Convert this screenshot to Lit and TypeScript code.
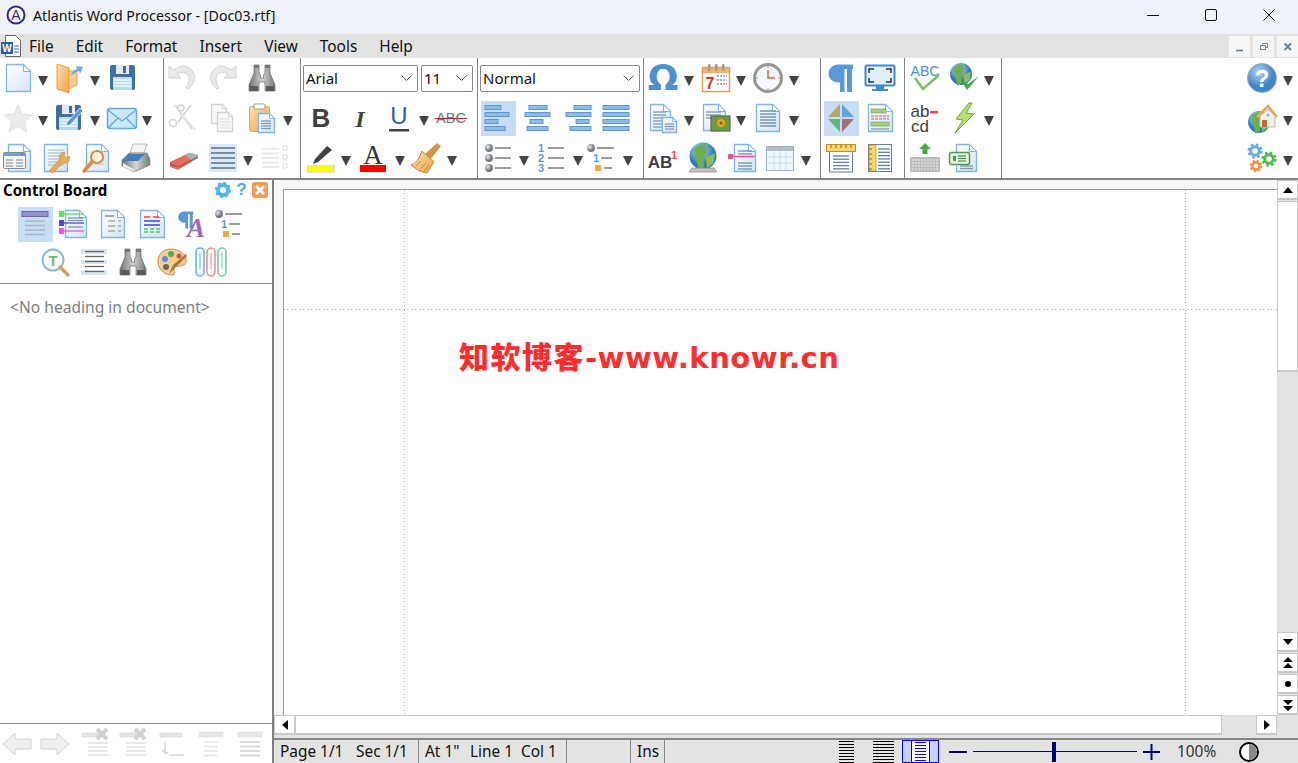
import { LitElement, css, html, svg, SVGTemplateResult } from 'lit'
import { customElement } from 'lit/decorators.js'

const SANS = "'Liberation Sans', Arial, sans-serif"

// shared bits for the toolbar icons
const page = (x: number, y: number, w: number, h: number, f = 7, s = '#7fb5ea', fill = 'url(#pg)') => svg`
  <path d="M${x} ${y}h${w - f}l${f} ${f}v${h - f}h${-w}z" fill=${fill} stroke=${s} stroke-width="1.3" />
  <path d="M${x + w - f} ${y}v${f}h${f}z" fill="#fff" stroke=${s} stroke-width="1" />`

const lines = (x: number, y: number, w: number, n: number, gap: number, c = '#7d96b4', sw = 1.3) => svg`
  ${Array.from({ length: n }, (_, i) => svg`<path d="M${x} ${y + i * gap}h${w}" stroke=${c} stroke-width=${sw} />`)}`

const bars = (rows: [number, number][]) => svg`
  ${rows.map(([x, w], i) => svg`<rect x=${x} y=${3.5 + i * 7} width=${w} height="4" fill="#8fbbe8" stroke="#5d97d5" stroke-width="1" />`)}`

const ball = (x: number, y: number, r = 3.9) => svg`<circle cx=${x} cy=${y} r=${r} fill="url(#ball)" />`

const gear = (cx: number, cy: number, r: number, c: string) => {
  const len = (2 * Math.PI * r) / 16
  return svg`
    <circle cx=${cx} cy=${cy} r=${r} fill="none" stroke=${c} stroke-width=${r * 0.55} stroke-dasharray="${len} ${len}" />
    <circle cx=${cx} cy=${cy} r=${r * 0.72} fill="#fff" stroke=${c} stroke-width=${r * 0.5} />`
}

const globe = (cx: number, cy: number, r: number) => svg`
  <circle cx=${cx} cy=${cy} r=${r} fill="url(#sea)" />
  <path d="M${cx - r * 0.7} ${cy - r * 0.5}q${r * 0.5} ${-r * 0.5} ${r * 0.9} ${-r * 0.3}l${r * 0.1} ${r * 0.5}l${-r * 0.3} ${r * 0.4}l${r * 0.1} ${r * 0.7}l${-r * 0.4} ${r * 0.3}l${-r * 0.2} ${-r * 0.8}z" fill="#6db04a" />
  <path d="M${cx + r * 0.2} ${cy + r * 0.1}l${r * 0.7} ${-r * 0.3}l${-r * 0.1} ${r * 0.7}l${-r * 0.5} ${r * 0.4}z" fill="#8abf55" />`

const binoculars = svg`
  <path d="M8 3h5v8l1.500 2v3h3v-3l1.500-2V3h5v8l5 12v6H19v-9h-6v9H3v-6l5-12z" fill="url(#steel)" stroke="#666" stroke-width=".7" />
  <path d="M8 3h5v3H8zM19 3h5v3h-5z" fill="#777" />
  <path d="M4 24h8v5H4zM20 24h8v5h-8z" fill="#5a5a5a" />`

const floppy = svg`
  <rect x="4" y="3" width="25" height="25" rx="2" fill="#41709f" />
  <rect x="10" y="3" width="13" height="9" fill="#e3e9f0" /><rect x="17" y="4" width="3" height="7" fill="#41709f" />
  <rect x="7" y="15" width="19" height="13" fill="#b6dbf5" />
  ${lines(8, 18, 17, 3, 3, '#fff', 1.2)}`

// paragraph mark: bowl with two heavy stems
const PILCROW = 'M28 2.500H12.500a9 9 0 0 0 0 18h2.500V30h4.500V7h2.500v23H27V7h1z'

const txt = (x: number, y: number, size: number, fill: string, s: string, weight = 'normal', style = 'normal', family = SANS) => svg`
  <text x=${x} y=${y} font-size=${size} fill=${fill} font-weight=${weight} font-style=${style} font-family=${family} text-anchor="middle">${s}</text>`

const GR = '#e6e6e6'
const GD = '#d2d2d2'

const ICONS: Record<string, SVGTemplateResult> = {
  new: page(4.5, 2.5, 24, 27),
  open: svg`
    <path d="M15 9h10v14l-10 5z" fill="#f7cf8d" stroke="#e8a64f" />
    <path d="M5 2l12 4v25L5 27z" fill="url(#org)" stroke="#e59f45" />
    <path d="M19 14q1-6 6-7l-1-3 7 1-3 7-1-3q-4 1-8 5z" fill="#6faee6" />`,
  save: floppy,
  star: svg`<path d="M16 3l4 9 10 1-7.5 6.5L25 30l-9-5.500L7 30l2.500-10.500L2 13l10-1z" fill="#ebebeb" stroke="#e0e0e0" />`,
  saveas: svg`${floppy}<path d="M14 24l1-4L28 6l3 3-13 14z" fill="#5f97cf" stroke="#fff" stroke-width=".8" />`,
  mail: svg`
    <rect x="1.500" y="6.500" width="29" height="20" rx="2.500" fill="#cfe7fa" stroke="#58ade9" stroke-width="1.500" />
    <path d="M2 8l14 11L30 8M2 26l10-10M30 26L20 16" fill="none" stroke="#58ade9" stroke-width="1.300" />`,
  web: svg`
    ${page(6.5, 2.5, 22, 27)}
    <rect x="1.500" y="10.500" width="22" height="16" rx="1" fill="#f4f4f4" stroke="#8a8a8a" />
    <rect x="2" y="11" width="21" height="3" fill="#6aa3dc" /><circle cx="20" cy="12.500" r="1" fill="#e05050" />
    ${lines(4, 18, 7, 3, 3, '#999', 1.200)}${lines(14, 18, 7, 3, 3, '#999', 1.200)}`,
  docwrench: svg`
    ${page(4.5, 2.5, 23, 27, 0)}${lines(8, 8, 16, 6, 3, '#b4c4d6')}
    <path d="M9 29l4 2 10-10q5 1 6-3l1-4-3 2-3-2 1-4q-4 0-6 4l1 3z" fill="#e8ab55" stroke="#c98a30" stroke-width=".6" />`,
  preview: svg`
    ${page(6.5, 2.5, 22, 27)}${lines(10, 10, 14, 5, 3, '#c0d0e2')}
    <circle cx="17" cy="15" r="6" fill="#fdf2df" stroke="#d98c35" stroke-width="2" />
    <path d="M12 20l-8 9" stroke="#d98c35" stroke-width="3.500" stroke-linecap="round" />`,
  printer: svg`
    <path d="M13 2h14l-3 9H10z" fill="#f4f4f4" stroke="#bbb" />
    <path d="M9 11h18l3 6v6L14 30 2 24v-6z" fill="url(#steel)" stroke="#8a8a8a" stroke-width=".8" />
    <path d="M8 12h17l-7 7H4z" fill="#3c7fc0" />
    <path d="M3 21l10 6 2 3-12-5z" fill="#eee" /><circle cx="24" cy="20" r="1" fill="#4c4" />`,
  undo: svg`<path d="M2 4v12h12l-4-4q7-4 11 1 3 5-2 13l2 1q10-9 5-17Q20-1 7 8z" fill="#eaeaea" stroke="${GD}" />`,
  redo: svg`<path d="M30 4v12H18l4-4q-7-4-11 1-3 5 2 13l-2 1Q1 18 6 10 12-1 25 8z" fill="#eaeaea" stroke="${GD}" />`,
  binoculars,
  cut: svg`
    <path d="M8 3l17 24M24 3L11 20" stroke="${GD}" stroke-width="1.500" fill="none" />
    <path d="M14 12L28 28" stroke="#e4e4e4" stroke-width="2" />
    <circle cx="6" cy="21" r="3.500" fill="none" stroke="${GD}" stroke-width="1.500" /><circle cx="14" cy="6" r="3" fill="none" stroke="${GD}" stroke-width="1.500" />`,
  copy: svg`
    ${page(5.5, 2.5, 15, 19, 4, GD, '#f7f7f7')}${page(11.5, 10.5, 15, 19, 4, GD, '#f7f7f7')}${lines(14, 17, 10, 4, 3, '#e2e2e2')}`,
  paste: svg`
    <rect x="3.500" y="4.500" width="20" height="25" rx="2" fill="url(#org)" stroke="#e3a34c" />
    <rect x="8" y="2" width="11" height="5" rx="1" fill="#fff" stroke="#999" />
    ${page(12.5, 11.5, 16, 19, 5)}${lines(15, 19, 10, 4, 2.500)}`,
  eraser: svg`
    <path d="M2 20l19-9 9 2 0 3-20 12-8-3z" fill="#e36b5f" />
    <path d="M17 13l5-2 8 2v3l-6 3z" fill="#9db0bc" /><path d="M2 22l8 3 20-10" fill="none" stroke="#a8433a" stroke-width="1" />`,
  justify: svg`<rect x="2" y="2" width="28" height="28" fill="#dbe8f5" />${lines(4, 6, 24, 5, 5, '#5b7089', 1.500)}`,
  linesoff: svg`${lines(3, 7, 17, 5, 4.500, '#e4e4e4', 1.600)}<path d="M24 4h4v4h-4zM24 13h4v4h-4zM24 22h4v4h-4z" fill="none" stroke="#dadada" />`,
  b: txt(16, 25, 26, '#3f3f3f', 'B', 'bold'),
  i: txt(16, 25, 24, '#444', 'I', 'bold', 'italic', "'Liberation Serif', serif"),
  u: svg`${txt(16, 22, 24, '#3c5e86', 'U')}<rect x="6" y="27" width="20" height="2.500" fill="#444" />`,
  abc: svg`${txt(16, 21, 14.500, '#777', 'ABC')}<path d="M0 16.500h32" stroke="#b03030" stroke-width="1.200" />`,
  hilite: svg`
    <path d="M13 20l-5 2 2-5L22 4l5 4z" fill="#444" /><rect x="2.500" y="23.500" width="27" height="7" fill="#ff0" stroke="#ddd" />`,
  fontcolor: svg`${txt(16, 22, 27, '#333', 'A', 'normal', 'normal', "'Liberation Serif', serif")}<rect x="3" y="23" width="26" height="7" fill="#f00" />`,
  brush: svg`
    <path d="M15 12L27 1l4 3-11 14z" fill="#d09848" />
    <path d="M12 9l12 11-7 11q-9-1-16-8 7-2 11-14z" fill="url(#org)" stroke="#c48a3a" />
    <path d="M6 24l5-5M10 27l6-6M14 29l5-6" stroke="#c48a3a" />`,
  al: bars([[2, 16], [2, 24], [2, 13], [2, 20]]),
  ac: bars([[7, 18], [3, 25], [8, 13], [5, 21]]),
  ar: bars([[13, 17], [5, 25], [15, 13], [9, 21]]),
  aj: bars([[3, 26], [3, 26], [3, 26], [3, 26]]),
  bul: svg`${[6, 16, 26].map((y) => svg`${ball(6, y)}${lines(12, y, 16, 1, 0, '#666')}`)}`,
  num: svg`
    ${['1', '2', '3'].map((n, i) => svg`${txt(6, 10 + i * 10, 11, '#5b9bdc', n, 'bold')}${lines(13, 6 + i * 10, 16, 1, 0, '#666')}`)}`,
  multi: svg`
    ${ball(5, 6)}${lines(11, 6, 17, 1, 0, '#666')}
    ${txt(10, 20, 11, '#5b9bdc', '1', 'bold')}${lines(15, 16, 11, 1, 0, '#666')}
    <rect x="9" y="23" width="6" height="6" fill="#f0a840" />${lines(18, 26, 8, 1, 0, '#666')}`,
  omega: txt(16, 28, 36, '#4f90cf', 'Ω', 'bold', 'normal', "'DejaVu Sans', sans-serif"),
  cal: svg`
    <rect x="2.500" y="5.500" width="27" height="24" fill="#fff" stroke="#e0a060" stroke-width="1.500" />
    <rect x="3" y="6" width="26" height="5" fill="#f0b070" />
    ${[8, 15, 22].map((x) => svg`<rect x=${x} y="2" width="2.500" height="7" rx="1" fill="#998" />`)}
    ${txt(10, 27, 16, '#e03030', '7', 'bold')}
    ${[14, 18, 22].map((y) => svg`<path d="M17 ${y}h10" stroke="#a8b4d0" stroke-width="2" stroke-dasharray="2 1" />`)}`,
  clock: svg`
    <circle cx="16" cy="16" r="13.500" fill="#f4f8fc" stroke="#969696" stroke-width="3" />
    <path d="M16 8v8h7" fill="none" stroke="#d8682c" stroke-width="1.500" />
    <path d="M16 4v2M16 26v2M4 16h2M26 16h2" stroke="#99a" />`,
  doc2: svg`
    ${page(3.5, 2.5, 20, 26)}${lines(6, 10, 13, 6, 3)}
    ${page(15.5, 15.5, 14, 15, 4)}${lines(18, 22, 9, 3, 2.500)}`,
  docimg: svg`
    ${page(3.5, 2.5, 22, 26)}${lines(6, 10, 15, 3, 3)}
    <rect x="11" y="14" width="19" height="15" fill="#6a9c3e" stroke="#666" stroke-width="1.200" />
    <circle cx="21" cy="21" r="4" fill="#e8a020" /><circle cx="21" cy="21" r="1.500" fill="#8a5a10" />`,
  doclines: svg`
    ${page(4.5, 2.5, 23, 27)}${lines(8, 9, 16, 6, 3, '#6f93bb', 1.500)}`,
  ab1: svg`${txt(13, 26, 17, '#3f3f3f', 'AB', 'bold')}${txt(27, 17, 11, '#ff4040', '1', 'bold')}`,
  globe: svg`
    ${globe(16, 14, 13.500)}
    <path d="M5 26h22l3 4H2z" fill="#c4c4c4" stroke="#888" stroke-width=".7" />`,
  docpink: svg`
    ${page(7.5, 2.5, 21, 27)}${lines(11, 9, 14, 2, 3, '#6f93bb')}${lines(11, 21, 14, 3, 3, '#6f93bb')}
    <rect x="1" y="12" width="5" height="5" fill="#f4509c" /><path d="M5 14.500h23" stroke="#f4509c" stroke-width="1.500" />`,
  table: svg`
    <rect x="2.500" y="4.500" width="27" height="24" fill="#f2f7fc" stroke="#9eb0c2" />
    <rect x="3" y="5" width="26" height="4" fill="#b0bdcb" />
    <path d="M10 9v19M16 9v19M22 9v19M3 15h26M3 21h26" stroke="#c4dcf0" />`,
  pilcrow: svg`<path d=${PILCROW} fill="#5a98d8" />`,
  monitor: svg`
    <rect x="1.500" y="3.500" width="29" height="20" rx="1" fill="#dff0fc" stroke="#3f8ccb" stroke-width="2" />
    <path d="M5 11V7h5M22 7h5v4M27 16v4h-5M10 20H5v-4" fill="none" stroke="#333" stroke-width="1.500" />
    <path d="M12 24h8v3h4v2H8v-2h4z" fill="#3f8ccb" />`,
  diamond: svg`
    <path d="M15 2v13H3z" fill="#b5a86a" /><path d="M17 2v13h12z" fill="#5aa8dc" />
    <path d="M15 17v13L3 17z" fill="#5cb585" /><path d="M17 17v13l12-13z" fill="#b06a80" />`,
  docgreen: svg`
    ${page(4.5, 2.5, 24, 27)}
    <rect x="7" y="7" width="15" height="4" fill="#a8d078" stroke="#6a9a3c" stroke-width=".6" />
    <rect x="7" y="20" width="18" height="4" fill="#a8d078" stroke="#6a9a3c" stroke-width=".6" />
    <path d="M7 14h18M7 17h18" stroke="#e04848" stroke-dasharray="3 1" />${lines(7, 27, 18, 1, 0)}`,
  rulerh: svg`
    <rect x="4.500" y="8" width="23" height="22" fill="#fff" stroke="#5f7f9f" />${lines(8, 14, 16, 5, 3.200, '#5f7f9f')}
    <rect x="1.500" y="2.500" width="29" height="7" fill="#f8d860" stroke="#b89030" />
    <path d="M6 3v3M11 3v3M16 3v3M21 3v3M26 3v3" stroke="#8a6a20" />`,
  rulerv: svg`
    <rect x="4.500" y="2.500" width="23" height="27" fill="#fff" stroke="#5f7f9f" />${lines(14, 7, 12, 7, 3.300, '#5f7f9f')}
    <rect x="5" y="3" width="7" height="26" fill="#f8d860" stroke="#b89030" stroke-width=".7" />
    <path d="M5 7h3M5 12h3M5 17h3M5 22h3M5 27h3" stroke="#8a6a20" />`,
  abccheck: svg`
    ${txt(16, 14, 14, '#4a8ed4', 'ABC', 'normal')}
    <path d="M6 16l8 11L30 13" fill="none" stroke="#7cc05a" stroke-width="2.500" />`,
  globecheck: svg`
    ${globe(13, 12, 11)}<path d="M13 18l6 10L31 14l-11 8z" fill="#3cae3c" />`,
  abcd: svg`
    ${txt(11, 15, 17, '#3f3f3f', 'ab')}<rect x="21" y="9" width="8" height="2.500" fill="#f04848" />${txt(11, 30, 17, '#3f3f3f', 'cd')}`,
  bolt: svg`<path d="M21 1L8 17l7 1-8 13L26 12l-8-1 6-10z" fill="#b8e070" stroke="#5fa83c" />`,
  keyboard: svg`
    <path d="M16 1l6 6h-3.500v5h-5V7H10z" fill="#3cae3c" />
    <rect x="1" y="15" width="30" height="15" rx="1" fill="#bdbdbd" />
    ${[18, 21, 24, 27].map((y) => svg`<path d="M3 ${y}h26" stroke="#eee" stroke-dasharray="2 1" />`)}`,
  docform: svg`
    ${page(8.5, 2.5, 20, 27)}${lines(12, 24, 13, 2, 2.500)}
    <rect x="1.500" y="10.500" width="20" height="12" rx="2" fill="#e8f5e0" stroke="#4f9a50" stroke-width="1.500" />
    <rect x="5" y="14" width="3" height="5" fill="#4f9a50" />${lines(10, 14, 8, 3, 2.500, '#4f9a50')}`,
  help: svg`
    <circle cx="16" cy="16" r="14.500" fill="url(#sky)" stroke="#8fa9c0" />
    ${txt(16, 25, 24, '#fff', '?', 'bold')}`,
  globehome: svg`
    ${globe(13, 20, 11)}
    <path d="M11 15L22 4l9 11" fill="none" stroke="#f0a850" stroke-width="2.500" />
    <path d="M14 14l8-7 7 7v11H14z" fill="#eee" stroke="#bbb" /><rect x="16" y="18" width="5" height="7" fill="#c8682a" /><circle cx="22" cy="13" r="1.500" fill="#9ab" />`,
  gears: svg`${gear(9, 9, 6, '#66aaf0')}${gear(23, 17, 6, '#55b955')}${gear(10, 24, 5, '#f09040')}`,
  head: svg`
    <rect x="3" y="3.500" width="26" height="5" fill="#9b8fd0" stroke="#6f64a8" />${lines(6, 13, 20, 4, 4.500, '#a9b6c8', 1.500)}`,
  doctags: svg`
    ${page(7.5, 2.5, 21, 27)}
    ${[['#50e850', 6], ['#4848f0', 15], ['#f050f0', 23]].map(([c, y]) => svg`
      <rect x="1" y=${(y as number) - 3} width="5" height="6" fill=${c as string} /><path d="M6 ${y}h20" stroke=${c as string} stroke-width="1.300" />`)}
    ${lines(10, 10, 15, 2, 2.500)}${lines(10, 19, 15, 1, 0)}`,
  docsmall: svg`
    ${page(4.5, 2.5, 23, 27)}${lines(8, 8, 9, 1, 0, '#777', 1.200)}
    ${[13, 18, 23].map((y) => svg`<path d="M11 ${y}h7M21 ${y}h3" stroke="#888" stroke-width="1.200" />`)}`,
  docrows: svg`
    ${page(4.5, 2.5, 24, 27)}
    <path d="M8 9h6M17 9h6" stroke="#f04040" stroke-width="1.500" />
    <path d="M8 13h16M8 17h16" stroke="#3c48e0" stroke-width="1.500" />
    <path d="M8 24h4M14 24h4M20 24h4M8 21h4M14 21h4M20 21h4" stroke="#40d050" stroke-width="1.500" />`,
  pa: svg`
    <path d=${PILCROW} fill="#5a98d8" transform="translate(1 2) scale(.62)" />
    ${txt(21, 29, 27, '#a468b8', 'A', 'bold', 'italic', "'Liberation Serif', serif")}`,
  findt: svg`
    <circle cx="14" cy="14" r="10.500" fill="#f4faf6" stroke="#8fb8cc" stroke-width="2" />
    ${txt(14, 20, 14, '#6fb87a', 'T', 'bold')}
    <path d="M21 21l8 8" stroke="#d9a060" stroke-width="3.500" stroke-linecap="round" />`,
  lineband: svg`
    <rect x="3" y="3" width="26" height="5" fill="#d8e6f4" /><rect x="3" y="14" width="26" height="4" fill="#d8e6f4" /><rect x="3" y="24" width="26" height="5" fill="#d8e6f4" />
    ${lines(7, 5.500, 19, 5, 5, '#666', 1.300)}`,
  palette: svg`
    <path d="M15 3C6 3 1 10 2 17c1 8 8 12 14 12 3 0 3-3 2-5-1-3 2-4 5-4 5 0 8-2 7-7-1-6-8-10-15-10z" fill="#f0d090" stroke="#b89050" />
    <circle cx="9" cy="13" r="3" fill="#5a8ad8" /><circle cx="15" cy="8" r="3" fill="#48b048" /><circle cx="23" cy="10" r="2.500" fill="#e04848" /><circle cx="10" cy="21" r="3" fill="#666" />
    <path d="M13 28l4-9L30 8l1 2-12 12z" fill="#a87838" />`,
  clips: svg`
    ${[['#58b0f0', 1], ['#f08888', 12], ['#70c8a0', 23]].map(([c, x]) => svg`
      <rect x=${x as number} y="2" width="8" height="28" rx="4" fill="none" stroke=${c as string} stroke-width="1.500" />
      <path d="M${(x as number) + 4} 7v16" stroke=${c as string} />`)}`,
  back: svg`<path d="M2 16L14 5v6h16v10H14v6z" fill="#efefef" stroke="${GD}" />`,
  fwd: svg`<path d="M30 16L18 5v6H2v10h16v6z" fill="#efefef" stroke="${GD}" />`,
  delx: svg`
    <rect x="2" y="5" width="16" height="4" fill="${GR}" stroke="${GD}" stroke-width=".6" />${lines(8, 15, 20, 4, 4, '#e0e0e0', 1.500)}
    <path d="M17 1l10 10M27 1L17 11" stroke="${GD}" stroke-width="4" />`,
  outl: svg`
    <rect x="4" y="5" width="22" height="4" fill="${GR}" stroke="${GD}" stroke-width=".6" />
    <path d="M9 15v10h3M6 22l3 3" fill="none" stroke="${GD}" stroke-width="1.300" />${lines(13, 27, 15, 1, 0, '#d8d8d8', 1.500)}`,
  hd1: svg`<rect x="4" y="4" width="24" height="5" fill="${GR}" stroke="#ddd" stroke-width=".6" />${lines(9, 14, 14, 4, 4.500, '#e6e6e6', 1.500)}`,
  hd2: svg`<rect x="4" y="4" width="24" height="5" fill="${GR}" stroke="#ddd" stroke-width=".6" />${lines(6, 14, 20, 4, 4.500, '#dcdcdc', 2)}`,
}

type Cell = [name: string, width: number, selected?: boolean]
const A = 'arrow'

const GROUPS: { width: number; rows: Cell[][] }[] = [
  {
    width: 163,
    rows: [
      [['new', 36], [A, 14], ['open', 36], [A, 18], ['save', 36]],
      [['star', 36], [A, 14], ['saveas', 36], [A, 18], ['mail', 36], [A, 14]],
      [['web', 36], ['docwrench', 40], ['preview', 40], ['printer', 40]],
    ],
  },
  {
    width: 136,
    rows: [
      [['undo', 38], ['redo', 40], ['binoculars', 40]],
      [['cut', 38], ['copy', 40], ['paste', 40], [A, 12]],
      [['eraser', 40], ['justify', 38], [A, 12], ['linesoff', 42]],
    ],
  },
  {
    width: 176,
    rows: [
      [],
      [['b', 40], ['i', 38], ['u', 40], [A, 10], ['abc', 44]],
      [['hilite', 40], [A, 10], ['fontcolor', 44], [A, 10], ['brush', 42], [A, 10]],
    ],
  },
  {
    width: 165,
    rows: [
      [],
      [['al', 39, true], ['ac', 39], ['ar', 39], ['aj', 39]],
      [['bul', 40], [A, 10], ['num', 44], [A, 10], ['multi', 38], [A, 14]],
    ],
  },
  {
    width: 176,
    rows: [
      [['omega', 38], [A, 14], ['cal', 40], [A, 10], ['clock', 44], [A, 8]],
      [['doc2', 38], [A, 14], ['docimg', 40], [A, 10], ['doclines', 44], [A, 8]],
      [['ab1', 38], ['globe', 42], ['docpink', 38], ['table', 36], [A, 16]],
    ],
  },
  {
    width: 83,
    rows: [
      [['pilcrow', 40], ['monitor', 38]],
      [['diamond', 40, true], ['docgreen', 38]],
      [['rulerh', 40], ['rulerv', 38]],
    ],
  },
  {
    width: 96,
    rows: [
      [['abccheck', 40], ['globecheck', 38], [A, 12]],
      [['abcd', 40], ['bolt', 38], [A, 12]],
      [['keyboard', 40], ['docform', 38]],
    ],
  },
]

const RIGHT: Cell[][] = [
  [['help', 32], [A, 20]],
  [['globehome', 32], [A, 20]],
  [['gears', 32], [A, 20]],
]

const BOARD: Cell[][] = [
  [['head', 39, true], ['doctags', 39], ['docsmall', 39], ['docrows', 39], ['pa', 39], ['multi', 39]],
  [['findt', 39], ['lineband', 39], ['binoculars', 39], ['palette', 39], ['clips', 39]],
]

const BOTTOM: Cell[] = [['back', 34], ['fwd', 42], ['delx', 40], ['delx', 36], ['outl', 40], ['hd1', 38], ['hd2', 40]]

const MENU = ['File', 'Edit', 'Format', 'Insert', 'View', 'Tools', 'Help']

const chevron = html`<svg class="chev" width="11" height="6" viewBox="0 0 11 6"><path d="M.5.500l5 5 5-5" fill="none" stroke="#555" /></svg>`

const tri = (d: string) => html`<svg width="14" height="14" viewBox="0 0 14 14"><path d=${d} fill="#000" /></svg>`

const hatch = (n: number, w: number, color: string) => html`
  <svg width=${w} height=${n * 3} viewBox="0 0 ${w} ${n * 3}">
    ${Array.from({ length: n }, (_, i) => svg`<path d="M0 ${i * 3 + 1.500}h${w}" stroke=${color} />`)}
  </svg>`

@customElement('app-root')
export class AppRoot extends LitElement {
  private cell([name, width, selected]: Cell) {
    if (name === A) {
      return html`<span class="slot" style="width:${width}px"><i class="arrow"></i></span>`
    }
    return html`
      <span class="slot" style="width:${width}px">
        <span class="ico ${selected ? 'sel' : ''}">
          <svg width="32" height="32" viewBox="0 0 32 32">${ICONS[name]}</svg>
        </span>
      </span>
    `
  }

  private combo(label: string, cls: string) {
    return html`<span class="combo ${cls}"><span>${label}</span>${chevron}</span>`
  }

  protected render() {
    return html`
      <svg class="defs" width="0" height="0">
        <defs>
          <linearGradient id="pg" x1="0" y1="0" x2="1" y2="1"><stop offset="0" stop-color="#fff" /><stop offset="1" stop-color="#d4e4fa" /></linearGradient>
          <linearGradient id="org" x1="0" y1="0" x2="1" y2="1"><stop offset="0" stop-color="#fde2b0" /><stop offset="1" stop-color="#f0a040" /></linearGradient>
          <linearGradient id="steel" x1="0" y1="0" x2="1" y2="0"><stop offset="0" stop-color="#6c6c6c" /><stop offset=".5" stop-color="#d4d4d4" /><stop offset="1" stop-color="#777" /></linearGradient>
          <radialGradient id="ball" cx=".35" cy=".35"><stop offset="0" stop-color="#eee" /><stop offset="1" stop-color="#6f7680" /></radialGradient>
          <radialGradient id="sea" cx=".4" cy=".3"><stop offset="0" stop-color="#bfe0f6" /><stop offset="1" stop-color="#2f78b8" /></radialGradient>
          <radialGradient id="sky" cx=".4" cy=".3"><stop offset="0" stop-color="#b8d8f2" /><stop offset="1" stop-color="#3f86c4" /></radialGradient>
        </defs>
      </svg>

      <header class="title">
        <svg class="logo" width="20" height="20" viewBox="0 0 20 20">
          <circle cx="10" cy="10" r="8.500" fill="#fff" stroke="#2a2aa8" stroke-width="2" />
          <text x="10" y="15" font-size="14" text-anchor="middle" fill="#2a2a8a" font-family="'Liberation Sans', sans-serif">A</text>
        </svg>
        <span class="title-text">Atlantis Word Processor - [Doc03.rtf]</span>
        <span class="win">
          <svg width="12" height="12" viewBox="0 0 12 12"><path d="M0 6.500h12" stroke="#111" /></svg>
        </span>
        <span class="win">
          <svg width="12" height="12" viewBox="0 0 12 12"><rect x=".5" y=".5" width="11" height="11" rx="1.500" fill="none" stroke="#111" /></svg>
        </span>
        <span class="win">
          <svg width="12" height="12" viewBox="0 0 12 12"><path d="M.5.500l11 11M11.500.500l-11 11" stroke="#111" /></svg>
        </span>
      </header>

      <nav class="menu">
        <svg class="word" width="22" height="24" viewBox="0 0 22 24">
          <path d="M5.500 1.500h10l5 5v16h-15z" fill="#fff" stroke="#666" />
          <path d="M14 12h5M14 15h5M14 18h5" stroke="#3a6fb8" />
          <rect x="1" y="8" width="12" height="12" fill="#2a5cb0" />
          <text x="7" y="18" font-size="10" font-weight="bold" text-anchor="middle" fill="#fff" font-family="'Liberation Sans', sans-serif">W</text>
        </svg>
        ${MENU.map((m) => html`<span class="menu-item">${m}</span>`)}
        <span class="mdi">
          <span class="mdi-btn"><svg width="10" height="10" viewBox="0 0 10 10"><path d="M1 8.500h7" stroke="#6a7f90" stroke-width="1.600" /></svg></span>
          <span class="mdi-btn"><svg width="10" height="10" viewBox="0 0 10 10"><path d="M3.500 2.500v-1h5v4h-2M1.500 3.500h5v4h-5z" fill="none" stroke="#6a7f90" /></svg></span>
          <span class="mdi-btn"><svg width="10" height="10" viewBox="0 0 10 10"><path d="M1.500 1.500l6.500 6.500M8 1.500L1.500 8" stroke="#6a7f90" stroke-width="1.800" /></svg></span>
        </span>
      </nav>

      <section class="toolbar">
        ${GROUPS.map(
          (g, n) => html`
            <div class="group" style="width:${g.width}px">
              ${g.rows.map(
                (row, r) => html`
                  <div class="row ${n === 3 && r > 0 ? 'inset' : ''}">
                    ${r === 0 && n === 2 ? html`${this.combo('Arial', 'font')}${this.combo('11', 'size')}` : ''}
                    ${r === 0 && n === 3 ? this.combo('Normal', 'style') : ''}
                    ${row.map((c) => this.cell(c))}
                  </div>
                `,
              )}
            </div>
          `,
        )}
        <div class="group right">
          ${RIGHT.map((row) => html`<div class="row">${row.map((c) => this.cell(c))}</div>`)}
        </div>
      </section>

      <main class="main">
        <aside class="panel">
          <div class="panel-head">
            <b>Control Board</b>
            <span class="panel-tools">
              <svg width="16" height="16" viewBox="0 0 16 16">
                <circle cx="8" cy="8" r="5" fill="none" stroke="#58b4ec" stroke-width="4" />
                <circle cx="8" cy="8" r="7" fill="none" stroke="#58b4ec" stroke-width="2.400" stroke-dasharray="2.750 2.750" />
              </svg>
              <span class="q">?</span>
              <svg width="16" height="16" viewBox="0 0 16 16">
                <rect width="16" height="16" rx="2.500" fill="#f59a56" />
                <path d="M4 4l8 8M12 4l-8 8" stroke="#fff" stroke-width="2.800" />
              </svg>
            </span>
          </div>
          <div class="board">
            ${BOARD.map((row) => html`<div class="board-row">${row.map((c) => this.cell(c))}</div>`)}
          </div>
          <div class="outline">&lt;No heading in document&gt;</div>
          <div class="panel-foot">${BOTTOM.map((c) => this.cell(c))}</div>
        </aside>

        <div class="work">
          <div class="doc-row">
            <div class="doc">
              <div class="page">
                <i class="vline one"></i>
                <i class="vline two"></i>
                <i class="hline"></i>
                <div class="stamp"><span class="cn">知软博客</span><span class="en">-www.knowr.cn</span></div>
              </div>
            </div>
            <div class="vscroll">
              <span class="sb">${tri('M7 4l5 6H2z')}</span>
              <span class="sb thumb"></span>
              <span class="track"></span>
              <span class="sb">${tri('M7 10L2 4h10z')}</span>
              <span class="sb">${tri('M7 1l5 5H2zM7 7l5 5H2z')}</span>
              <span class="sb"><svg width="14" height="14" viewBox="0 0 14 14"><circle cx="7" cy="7" r="3" /></svg></span>
              <span class="sb">${tri('M7 7L2 2h10zM7 13L2 8h10z')}</span>
            </div>
          </div>
          <div class="hscroll">
            <span class="sb h">${tri('M4 7l6-5v10z')}</span>
            <span class="sb h bar"></span>
            <span class="track"></span>
            <span class="sb h">${tri('M10 7L4 2v10z')}</span>
            <span class="corner"></span>
          </div>
          <footer class="status">
            <span class="st one"><span class="page-no">Page 1/1</span><span>Sec 1/1</span></span>
            <span class="st two"><span class="at">At 1"</span><span class="ln">Line 1</span><span>Col 1</span></span>
            <span class="st three"></span>
            <span class="st four">Ins</span>
            <span class="fill"></span>
            <span class="view">${hatch(8, 15, '#000')}</span>
            <span class="view">${hatch(8, 21, '#000')}</span>
            <span class="view on"><span class="sheet">${hatch(7, 11, '#00f')}</span></span>
            <svg class="minus" width="18" height="4" viewBox="0 0 18 4"><rect width="18" height="2" y="1" fill="#000080" /></svg>
            <svg class="slider" width="164" height="20" viewBox="0 0 164 20">
              <rect y="9" width="164" height="1" fill="#000080" />
              <rect x="79" width="4" height="20" fill="#000080" />
            </svg>
            <svg class="plus" width="18" height="18" viewBox="0 0 18 18"><path d="M0 9h17M8.500 1v16" stroke="#000080" stroke-width="2" /></svg>
            <span class="pct">100%</span>
            <svg class="contrast" width="20" height="20" viewBox="0 0 20 20">
              <circle cx="10" cy="10" r="9" fill="#fff" stroke="#000" stroke-width="2" />
              <path d="M10 2a8 8 0 0 1 0 16z" fill="#888" />
            </svg>
          </footer>
        </div>
      </main>
    `
  }

  static styles = css`
    :host {
      display: flex;
      flex-direction: column;
      width: 100%;
      height: 100vh;
      overflow: hidden;
      background: #fff;
      color: #1a1a1a;
      font-family: 'Noto Sans', 'Open Sans', sans-serif;
      font-size: 14px;
    }

    svg {
      display: block;
      flex: none;
      overflow: visible;
    }

    .defs {
      height: 0;
    }

    .title {
      display: flex;
      align-items: center;
      flex: none;
      box-sizing: border-box;
      height: 34px;
      padding: 0 0 4px 6px;
      background: #eef2f9;
    }

    .title-text {
      flex: 1;
      margin-left: 7px;
      font-size: 14.2px;
      color: #111;
    }

    .win {
      display: flex;
      justify-content: center;
      align-items: center;
      width: 58px;
      height: 30px;
    }

    .menu {
      display: flex;
      align-items: center;
      flex: none;
      height: 24px;
      background: #e3e3e3;
    }

    .word {
      margin-right: -4px;
    }

    .menu-item {
      padding: 0 11px;
      font-size: 15.4px;
      color: #111;
    }

    .mdi {
      display: flex;
      gap: 3px;
      margin-left: auto;
      align-self: flex-end;
    }

    .mdi-btn {
      display: flex;
      justify-content: center;
      align-items: center;
      width: 21px;
      height: 21px;
      margin-bottom: 1px;
      background: #f6f6f6;
    }

    .toolbar {
      display: flex;
      flex: none;
      height: 120px;
      border-bottom: 2px solid #858585;
    }

    .group {
      flex: none;
      border-right: 1px solid #858585;
    }

    .group.right {
      width: 52px;
      margin-left: auto;
      border: 0;
    }

    .row {
      display: flex;
      align-items: center;
      height: 40px;
    }

    .row.inset {
      padding-left: 1px;
    }

    .slot {
      display: flex;
      justify-content: center;
      align-items: center;
      flex: none;
    }

    .ico {
      display: flex;
      justify-content: center;
      align-items: center;
      width: 35px;
      height: 35px;
    }

    .ico.sel {
      background: #c6ddf4;
    }

    .arrow {
      width: 0;
      height: 0;
      margin-top: 5px;
      border-left: 5px solid transparent;
      border-right: 5px solid transparent;
      border-top: 10px solid #444;
    }

    .combo {
      display: flex;
      align-items: center;
      justify-content: space-between;
      flex: none;
      box-sizing: border-box;
      height: 27px;
      padding: 0 5px 0 2px;
      border: 1px solid #888;
      border-radius: 2px;
      font-size: 15px;
      color: #111;
    }

    .combo.font {
      width: 115px;
      margin-left: 2px;
    }

    .combo.size {
      width: 52px;
      margin-left: 3px;
    }

    .combo.style {
      width: 160px;
      margin-left: 2px;
    }

    .main {
      display: flex;
      flex: 1;
      min-height: 0;
    }

    .panel {
      display: flex;
      flex-direction: column;
      flex: none;
      width: 272px;
    }

    .panel-head {
      display: flex;
      align-items: center;
      justify-content: space-between;
      box-sizing: border-box;
      height: 20px;
      padding: 0 4px 1px 3px;
      font-size: 15.1px;
      color: #000;
    }

    .panel-tools {
      display: flex;
      align-items: center;
      gap: 4px;
    }

    .q {
      width: 13px;
      color: #4aa8e8;
      font: bold 17px/16px 'Liberation Sans', sans-serif;
      text-align: center;
    }

    .board {
      flex: none;
      box-sizing: border-box;
      height: 84px;
      padding-top: 5px;
      border-bottom: 1px solid #858585;
    }

    .board-row {
      display: flex;
      justify-content: center;
      height: 38px;
      padding-right: 7px;
    }

    .outline {
      flex: 1;
      padding: 13px 0 0 10px;
      color: #808080;
      font-size: 15.6px;
      line-height: 20px;
    }

    .panel-foot {
      display: flex;
      align-items: center;
      flex: none;
      height: 39px;
      border-top: 1px solid #858585;
    }

    .work {
      display: flex;
      flex-direction: column;
      flex: 1;
      min-width: 0;
      border-left: 2px solid #808080;
    }

    .doc-row {
      display: flex;
      flex: none;
      height: 535px;
    }

    .doc {
      display: flex;
      flex: 1;
      min-width: 0;
      padding: 9px 0 0 9px;
      background: #f7f7f7;
    }

    .page {
      display: grid;
      flex: 1;
      grid-template-columns: 120px 1px 780px 1px 1fr;
      grid-template-rows: 119px 1px 1fr;
      border-top: 1px solid #999;
      border-left: 1px solid #999;
      background: #fff;
    }

    .vline {
      grid-row: 1 / -1;
      background: repeating-linear-gradient(to bottom, #aaa 0 1px, transparent 1px 3px, #aaa 3px 4px, transparent 4px 8px);
    }

    .vline.one {
      grid-column: 2;
    }

    .vline.two {
      grid-column: 4;
    }

    .hline {
      grid-column: 1 / -1;
      grid-row: 2;
      background: repeating-linear-gradient(to right, #aaa 0 1px, transparent 1px 3px, #aaa 3px 4px, transparent 4px 8px);
    }

    .stamp {
      grid-column: 3;
      grid-row: 3;
      display: flex;
      align-items: baseline;
      height: 50px;
      padding: 27px 0 0 54px;
      color: #ff2d2d;
      font-weight: 700;
      white-space: nowrap;
    }

    .cn {
      font: 900 30px/36px 'Noto Sans CJK SC', sans-serif;
      letter-spacing: 1.5px;
    }

    .en {
      font: 700 29px/36px 'DejaVu Sans', sans-serif;
      letter-spacing: 0.55px;
    }

    .vscroll {
      display: flex;
      flex-direction: column;
      gap: 1px;
      flex: none;
      width: 21px;
      background: #e3e3e3;
    }

    .sb {
      display: flex;
      justify-content: center;
      align-items: center;
      flex: none;
      box-sizing: border-box;
      height: 20px;
      border: 2px solid #c8c8c8;
      border-width: 1px 1px 2px 1px;
      background: #fff;
    }

    .sb.thumb {
      height: 171px;
    }

    .track {
      flex: 1;
    }

    .hscroll {
      display: flex;
      flex: none;
      height: 23px;
      padding-bottom: 3px;
      box-sizing: border-box;
      background: #e3e3e3;
    }

    .sb.h {
      width: 21px;
    }

    .sb.bar {
      width: 927px;
    }

    .corner {
      flex: none;
      width: 21px;
    }

    .status {
      display: flex;
      align-items: center;
      flex: none;
      height: 25px;
      box-sizing: border-box;
      border-top: 2px solid #858585;
      background: #e3e3e3;
      font-size: 15.4px;
      color: #111;
    }

    .st {
      display: flex;
      align-items: center;
      flex: none;
      box-sizing: border-box;
      height: 100%;
      padding-left: 6px;
      border-right: 1px solid #858585;
      white-space: nowrap;
    }

    .st.one {
      width: 145px;
    }

    .page-no {
      width: 76px;
    }

    .st.two {
      width: 148px;
    }

    .at {
      width: 45px;
    }

    .ln {
      width: 51px;
    }

    .st.three {
      width: 64px;
    }

    .st.four {
      width: 34px;
    }

    .fill {
      flex: 1;
    }

    .view {
      display: flex;
      justify-content: center;
      align-items: center;
      flex: none;
      box-sizing: border-box;
      width: 37px;
      height: 100%;
    }

    .view.on {
      border: 1px solid #0000ff;
      background: #ccd0ff;
    }

    .sheet {
      padding: 0 3px;
      border: 1px solid #0000ff;
      background: #fff;
    }

    .minus {
      margin-left: 10px;
    }

    .slider {
      margin-left: 6px;
    }

    .plus {
      margin-left: 6px;
    }

    .pct {
      flex: none;
      width: 44px;
      margin-left: 16px;
      color: #333;
    }

    .contrast {
      margin: 0 39px 0 18px;
    }
  `
}

declare global {
  interface HTMLElementTagNameMap {
    'app-root': AppRoot
  }
}
